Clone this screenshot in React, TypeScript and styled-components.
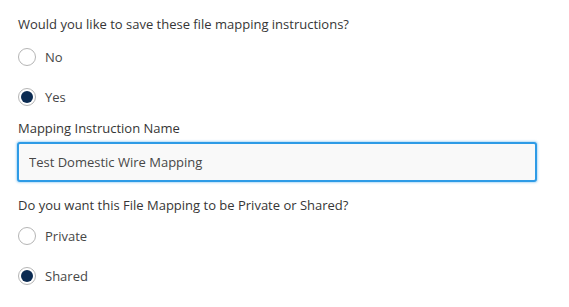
import { useState } from "react";
import styled, { createGlobalStyle } from "styled-components";

const GlobalStyle = createGlobalStyle`
    body {
        margin: 0;
        background: #ffffff;
        font-family: "Open Sans", "Liberation Sans", sans-serif;
        color: #363636;
    }
`;

const Form = styled.div`
    display: flex;
    flex-direction: column;
    padding: 14px 0 0 18px;
    width: 519px;
`;

const Question = styled.div<{ $gap?: number; $after?: number }>`
    font-size: 13px;
    line-height: 20px;
    margin-top: ${(p) => p.$gap ?? 0}px;
    margin-bottom: ${(p) => p.$after ?? 3}px;
`;

const RadioRow = styled.label`
    display: flex;
    align-items: center;
    gap: 9px;
    height: 40px;
    font-size: 13px;
    color: #474747;
    cursor: pointer;
`;

const Circle = styled.span<{ $checked: boolean }>`
    box-sizing: border-box;
    width: 18px;
    height: 18px;
    border-radius: 50%;
    border: 1px solid #b5b5b5;
    background: #ffffff;
    display: flex;
    align-items: center;
    justify-content: center;

    &::after {
        content: "";
        width: 12px;
        height: 12px;
        border-radius: 50%;
        background: #0b2b52;
        display: ${(p) => (p.$checked ? "block" : "none")};
    }
`;

const FieldLabel = styled.div`
    font-size: 13px;
    line-height: 20px;
    margin-top: 1px;
    color: #363636;
`;

const TextInput = styled.input`
    box-sizing: border-box;
    margin: 4px 0 0 -1px;
    width: 520px;
    height: 40px;
    padding: 0 10px;
    border: 2px solid #2e9be6;
    border-radius: 3px;
    box-shadow: 0 0 2px 1px rgba(46, 155, 230, 0.35);
    background: #f9f9f9;
    font-family: "Open Sans", "Liberation Sans", sans-serif;
    font-size: 13px;
    color: #474747;
    outline: none;
`;

type RadioProps = {
    options: string[];
    value: string;
    onChange: (v: string) => void;
};

function RadioGroup({ options, value, onChange }: RadioProps) {
    return (
        <div>
            {options.map((opt) => (
                <RadioRow key={opt} onClick={() => onChange(opt)}>
                    <Circle $checked={value === opt} />
                    {opt}
                </RadioRow>
            ))}
        </div>
    );
}

export default function App() {
    const [save, setSave] = useState("Yes");
    const [name, setName] = useState("Test Domestic Wire Mapping");
    const [share, setShare] = useState("Shared");

    return (
        <>
            <GlobalStyle />
            <Form>
                <Question>Would you like to save these file mapping instructions?</Question>
                <RadioGroup options={["No", "Yes"]} value={save} onChange={setSave} />
                <FieldLabel>Mapping Instruction Name</FieldLabel>
                <TextInput value={name} onChange={(e) => setName(e.target.value)} />
                <Question $gap={13} $after={1}>
                    Do you want this File Mapping to be Private or Shared?
                </Question>
                <RadioGroup options={["Private", "Shared"]} value={share} onChange={setShare} />
            </Form>
        </>
    );
}
